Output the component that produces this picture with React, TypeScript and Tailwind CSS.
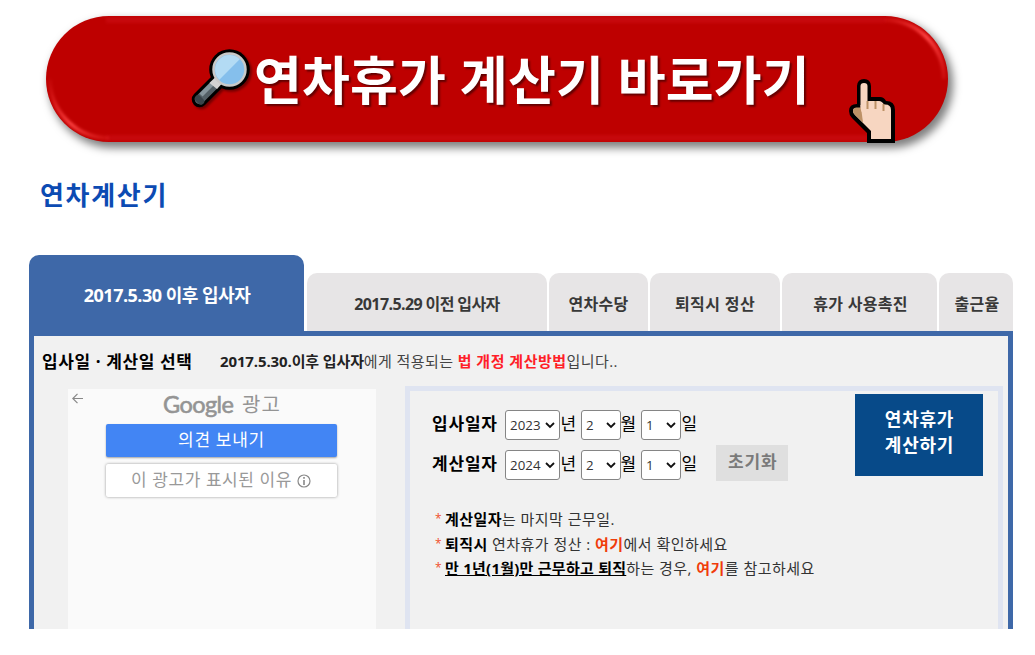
import React, { useState } from "react";

interface Tab {
  id: string;
  label: string;
  className: string;
}

const tabs: Tab[] = [
  { id: "before", label: "2017.5.29 이전 입사자", className: "w-[240px] tracking-[-0.6px]" },
  { id: "pay", label: "연차수당", className: "w-[99px] tracking-[0.3px]" },
  { id: "retire", label: "퇴직시 정산", className: "w-[130px] tracking-[0.4px]" },
  { id: "promote", label: "휴가 사용촉진", className: "w-[155px] pl-0.5 tracking-[0.3px]" },
  { id: "rate", label: "출근율", className: "w-[74px] pl-0.5 tracking-[0.2px]" },
];

const Magnifier = () => (
  <svg width="60" height="60" viewBox="0 0 60 60" className="drop-shadow-[2px_2px_1px_rgba(0,0,0,0.4)]">
    <path d="M25 34 L8.500 50.500" stroke="#000" strokeWidth="15.500" strokeLinecap="round" />
    <circle cx="38.500" cy="20.500" r="20.300" fill="#000" />
    <path d="M23 36 L8.500 50.500" stroke="#546066" strokeWidth="9.500" strokeLinecap="round" />
    <path d="M22 34 L10 46" stroke="#86959c" strokeWidth="4.500" />
    <path d="M7 49.500 L10 52.500" stroke="#39444a" strokeWidth="6.500" strokeLinecap="round" />
    <path d="M18.500 34 L24.500 28 L31 34.500 L26 40 Z" fill="#d2d2d2" />
    <circle cx="38.500" cy="20.500" r="16" fill="#85bfec" stroke="#c9c9c9" strokeWidth="2.500" />
    <path d="M28.300 30.700 A14.400 14.400 0 0 1 48.700 10.300 Z" fill="#b3dbf4" />
  </svg>
);

const PointerHand = () => (
  <svg width="46" height="64" viewBox="0 0 46 64">
    <path
      d="M18 64 V54 L3 39 Q0 36 0 32 Q0 25 8 25 V7 Q8.500 0 15 0 Q21.500 0 22 7 V18 H31 Q35 18 37 22 Q46 22 46 31 V64 Z"
      fill="#000"
    />
    <path
      d="M22 60 V52 L6 36 Q4 34 4 32 Q4 29 7 29 L11.500 29 V7 Q11.500 4 15 4 Q18.500 4 18.500 7 V22 H30 Q33 22 35 25.500 Q42 25 42 31 V60 Z"
      fill="#f7d6c1"
    />
    <path d="M7 28.500 H12 L14 43.500 L6 36 Q4 34 4 32 Q4 29 7 28.500 Z" fill="#bd9166" />
    <path d="M11.500 26 Q11.500 34 15 35 L14 26 Z" fill="#f7d6c1" />
    <path d="M18.500 22 V30 M26.500 22 V30 M34.500 25 V32" stroke="#bd9166" strokeWidth="2" />
  </svg>
);

const Picker = ({ value, className }: { value: string; className: string }) => (
  <button
    className={`flex h-[30px] items-center justify-between rounded-[3px] border border-[#858585] bg-white pt-0.5 pr-1 pl-[4.500px] text-[13.300px] text-[#333] ${className}`}
  >
    <span>{value}</span>
    <svg width="10" height="7" viewBox="0 0 10 7" fill="none" className="mb-0.5">
      <path d="M1 1 L5 5 L9 1" stroke="#111" strokeWidth="1.800" />
    </svg>
  </button>
);

const DateRow = ({ label, year }: { label: string; year: string }) => (
  <div className="flex h-10 items-center text-[17px] text-black">
    <span className="w-[72.600px] pb-0.5 text-[17px] font-bold tracking-[0.8px]">{label}</span>
    <Picker value={year} className="w-[55px]" />
    <span className="w-[21px] pb-0.5 pl-px">년</span>
    <Picker value="2" className="w-10" />
    <span className="w-5 pb-0.5">월</span>
    <Picker value="1" className="w-10" />
    <span className="pb-0.5 pl-px">일</span>
  </div>
);

export default function App() {
  const [active, setActive] = useState("after");

  return (
    <main className="h-[655px] w-[1035px] overflow-hidden bg-white pt-[15.500px] font-['Open_Sans','Noto_Sans_CJK_KR',sans-serif] whitespace-nowrap">
      {/* Banner */}
      <button className="relative ml-[46px] flex h-[126px] w-[902px] items-center rounded-full bg-[#be0000] pl-[145px] shadow-[4px_5px_9px_1px_rgba(0,0,0,0.5)]">
        {/* Bevel highlights on the rim */}
        <svg width="902" height="126" viewBox="0 0 902 126" fill="none" className="absolute inset-0">
          <defs>
            <clipPath id="pill">
              <rect width="902" height="126" rx="63" />
            </clipPath>
            <linearGradient id="topRight" gradientUnits="userSpaceOnUse" x1="836" y1="0" x2="902" y2="66">
              <stop offset="0" stopColor="#ff3c3c" stopOpacity="0.1" />
              <stop offset="0.5" stopColor="#ff4646" />
              <stop offset="1" stopColor="#ff3c3c" stopOpacity="0.1" />
            </linearGradient>
            <linearGradient id="bottomLeft" gradientUnits="userSpaceOnUse" x1="0" y1="61" x2="66" y2="127">
              <stop offset="0" stopColor="#ff3c3c" stopOpacity="0" />
              <stop offset="0.55" stopColor="#ff4646" />
              <stop offset="1" stopColor="#ff3c3c" stopOpacity="0.1" />
            </linearGradient>
          </defs>
          <g clipPath="url(#pill)">
            <path d="M60 4 H840 M60 122 H840" stroke="#d01018" strokeOpacity="0.5" strokeWidth="6" className="blur-[1.5px]" />
            <path d="M839 4 A59 59 0 0 1 898 63" stroke="url(#topRight)" strokeWidth="4" className="blur-[1.5px]" />
            <path d="M4 63 A59 59 0 0 0 63 122" stroke="url(#bottomLeft)" strokeWidth="3.500" className="blur-[1.5px]" />
          </g>
        </svg>
        <span className="relative">
          <Magnifier />
        </span>
        <span className="relative pt-0.5 pl-[3px] text-[52px] leading-none font-bold tracking-[0.2px] text-white [text-shadow:2px_2px_2px_rgba(60,0,0,0.7)]">
          연차휴가 계산기 바로가기
        </span>
        <span className="absolute top-[63.500px] left-[803px]">
          <PointerHand />
        </span>
      </button>

      <h1 className="mt-[33.500px] ml-10 h-10 text-[26px] leading-10 font-bold tracking-[1.7px] text-[#0c4bb3]">
        연차계산기
      </h1>

      {/* Tabs */}
      <nav className="mt-[40px] ml-[29px] flex h-[76px] items-end gap-[2px] leading-none">
        <button
          onClick={() => setActive("after")}
          className="mr-px h-[76px] w-[275px] rounded-t-[10px] bg-[#3e68a8] pt-1 pl-px text-[18px] font-bold tracking-[-0.5px] text-white"
        >
          2017.5.30 이후 입사자
        </button>
        {tabs.map((tab) => (
          <button
            key={tab.id}
            aria-selected={active === tab.id}
            onClick={() => setActive(tab.id)}
            className={`h-[58px] rounded-t-[10px] bg-[#e7e5e6] pt-1 text-[16px] font-bold text-[#383838] ${tab.className}`}
          >
            {tab.label}
          </button>
        ))}
      </nav>

      {/* Panel */}
      <section className="ml-[29px] h-[298px] w-[984px] border-x-[5px] border-t-[5px] border-[#3e68a8] bg-[#f1f1f1]">
        <div className="flex h-[50px] items-center pl-2">
          <h2 className="w-[178px] pt-0.5 text-[17px] font-bold tracking-[0.6px] text-black">입사일 · 계산일 선택</h2>
          <p className="text-[15px] tracking-[0.4px] text-[#444]">
            <b className="tracking-[-0.12px] text-[#222]">2017.5.30.이후 입사자</b>에게 적용되는{" "}
            <b className="tracking-[0.5px] text-[#ff1e28]">법 개정 계산방법</b>입니다..
          </p>
        </div>

        <div className="flex h-[243px]">
          {/* Ad */}
          <aside className="relative mt-[3px] ml-[34px] flex w-[308px] flex-col items-center bg-[#fafafa] pr-0.5">
            <svg width="11" height="11" viewBox="0 0 11 11" fill="none" className="absolute top-1 left-1">
              <path d="M11 5.500 H1 M5.500 0.800 L0.800 5.500 L5.500 10.200" stroke="#888" strokeWidth="1.200" />
            </svg>
            <div className="flex h-[35px] items-center pb-[3px] pl-0.5 text-[20px] tracking-[1px] text-[#949494]">
              <span className="w-[79px] font-[Lato] text-[23.500px] tracking-[-0.6px] [-webkit-text-stroke:0.6px_#949494]">Google</span>
              <span>광고</span>
            </div>
            <button className="h-[33px] w-[231px] rounded-[2px] bg-[#4285f4] pb-0.5 pl-px text-[17px] tracking-[0.7px] text-white shadow-[0_1px_2px_rgba(0,0,0,0.35)]">
              의견 보내기
            </button>
            <button className="mt-[7px] flex h-[33px] w-[231px] items-center justify-center gap-[5px] rounded-[2px] bg-white pb-0.5 text-[17px] tracking-[0.6px] text-[#999] shadow-[0_0_3px_rgba(0,0,0,0.4)]">
              이 광고가 표시된 이유
              <svg width="14" height="14" viewBox="0 0 14 14" fill="none" stroke="#888" className="mt-[3px]">
                <circle cx="7" cy="7" r="6" strokeWidth="1.200" />
                <path d="M7 3 V4.800 M7 6 V11" strokeWidth="1.600" />
              </svg>
            </button>
          </aside>

          {/* Form */}
          <div className="ml-[29px] flex w-[598px] justify-between border-x-[5px] border-t-[5px] border-[#dfe4f1]">
            <div className="pt-[14px] pl-[22px]">
              <div className="flex items-end">
                <div>
                  <DateRow label="입사일자" year="2023" />
                  <DateRow label="계산일자" year="2024" />
                </div>
                <button className="mb-1 ml-[19px] h-9 w-[72px] bg-[#dfdfdf] pb-0.5 pl-px text-[17px] font-bold tracking-[0.8px] text-[#7a7a7a]">
                  초기화
                </button>
              </div>
              <ul className="mt-[22px] pl-[3px] text-[15px] leading-[24.500px] tracking-[0.45px] text-[#333]">
                <li className="flex">
                  <i className="w-[10px] text-[12px] text-[#f0502a] not-italic">*</i>
                  <p>
                    <b className="text-black">계산일자</b>는 마지막 근무일.
                  </p>
                </li>
                <li className="flex">
                  <i className="w-[10px] text-[12px] text-[#f0502a] not-italic">*</i>
                  <p>
                    <b className="text-black">퇴직시</b> 연차휴가 정산 : <b className="text-[#f03c0a]">여기</b>에서 확인하세요
                  </p>
                </li>
                <li className="flex">
                  <i className="w-[10px] text-[12px] text-[#f0502a] not-italic">*</i>
                  <p>
                    <b className="tracking-[0.25px] text-black underline">만 1년(1월)만 근무하고 퇴직</b>하는 경우,{" "}
                    <b className="text-[#f03c0a]">여기</b>를 참고하세요
                  </p>
                </li>
              </ul>
            </div>
            <button className="mt-[3px] mr-[15px] h-[82px] w-[128px] bg-[#074a89] pb-1.5 pl-px text-[18px] leading-[26px] font-bold tracking-[0.8px] text-white">
              연차휴가
              <br />
              계산하기
            </button>
          </div>
        </div>
      </section>
    </main>
  );
}
